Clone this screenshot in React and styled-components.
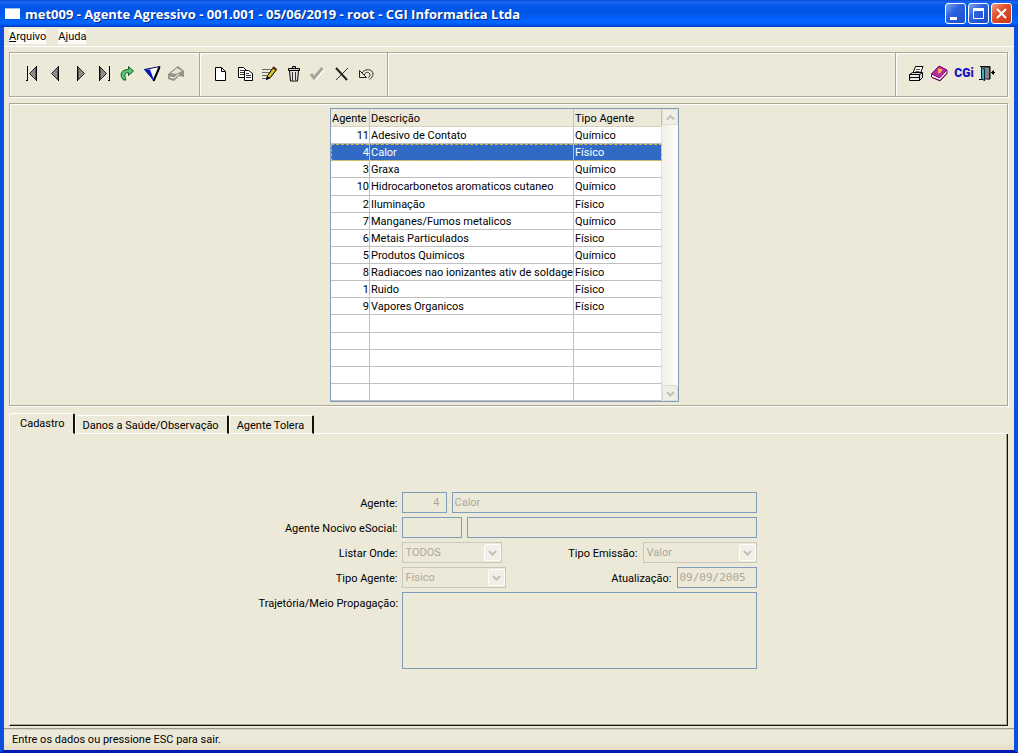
import React from 'react'
import styled, { createGlobalStyle, css } from 'styled-components'

const GlobalStyle = createGlobalStyle`
  *, *::before, *::after {
    box-sizing: border-box;
  }

  body {
    margin: 0;
    font-family: Roboto, 'Liberation Sans', sans-serif;
    font-size: 11px;
    line-height: 14px;
    color: #000;
    background: #ece9d8;
  }

  button, input, select, textarea {
    margin: 0;
    font: inherit;
    color: inherit;
  }
`

const Window = styled.div`
  min-height: 100vh;

  display: flex;
  flex-flow: column;

  background: #ece9d8;

  border: solid #0a4fe0;
  border-width: 0 4px 3px 4px;
  border-bottom-color: #0019b0;
`

const TitleBar = styled.header`
  flex: 0 0 auto;
  height: 27px;
  margin: 0 -4px;
  padding: 0 6px 0 5px;

  display: flex;
  align-items: center;

  background: linear-gradient(
    #0a47d8 0,
    #1a6af5 2px,
    #0558ea 5px,
    #0054e6 12px,
    #0162fb 20px,
    #0165ff 23px,
    #0048d8 26px,
    #0038b8 27px
  );
`

const WindowIcon = styled.span`
  flex: 0 0 auto;
  width: 15px;
  height: 11px;
  margin-right: 5px;

  background: #fff;
  border-top: 1px solid #9fc0f5;
`

const Title = styled.h1`
  flex: 1 1 auto;
  margin: 0;
  padding-top: 1px;

  font-family: 'Open Sans', 'Noto Sans', sans-serif;
  font-size: 13px;
  line-height: 16px;
  font-weight: 700;
  white-space: nowrap;

  color: #fff;
  text-shadow: 1px 1px 0 #0a2a8a;
`

const WindowButtons = styled.div`
  display: flex;
  gap: 2px;
`

const WindowButton = styled.button`
  width: 21px;
  height: 21px;
  padding: 0;

  display: flex;

  background: ${({ $close }) =>
    $close
      ? 'linear-gradient(135deg, #f0a088, #e0502c 40%, #c43c18)'
      : 'linear-gradient(135deg, #7ea4f4, #2c62e0 40%, #1c4cc8)'};
  border: 1px solid #fff;
  border-radius: 3px;
`

const MenuBar = styled.nav`
  flex: 0 0 auto;
  height: 20px;
  padding: 2px 5px;

  display: flex;
  gap: 12px;

  border-bottom: 1px solid #fff;
`

const MenuItem = styled.button`
  height: 15px;
  padding: 1px 0 0;

  background: #fcfbf6;
  border: 0;
`

const etched = css`
  border: 1px solid #aca899;
  box-shadow: 1px 1px 0 #fff, inset 1px 1px 0 #fff;
`

const ToolBar = styled.div`
  flex: 0 0 auto;
  height: 45px;
  margin: 5px 6px 0 5px;

  display: flex;

  ${etched}
`

const ToolGroup = styled.div`
  flex: ${({ $grow }) => ($grow ? '1 1 auto' : '0 0 auto')};
  padding: 0 ${({ $right }) => $right || 7}px 3px 9px;

  display: flex;
  align-items: center;

  & + & {
    padding-left: 8px;
    border-left: 1px solid #aca899;
    box-shadow: inset 1px 0 0 #fff;
  }
`

const ToolButton = styled.button`
  width: 24px;
  height: 24px;
  padding: 0;

  display: flex;

  background: none;
  border: 0;
`

const ListPanel = styled.section`
  flex: 0 0 auto;
  margin: 6px 6px 0 5px;
  padding: 4px 12px 3px 4px;

  display: flex;
  justify-content: center;

  ${etched}
`

const Grid = styled.div`
  display: flex;

  background: #fff;
  border: 1px solid #7f9db9;
`

const Table = styled.table`
  width: 331px;
  height: 292px;

  table-layout: fixed;
  border-collapse: separate;
  border-spacing: 0;
`

const HeadCell = styled.th`
  width: ${({ $width }) => $width};
  height: 18px;
  padding: 2px 0 0 1px;

  font-weight: 400;
  text-align: left;
  white-space: nowrap;

  background: #ece9d8;
  border-bottom: 1px solid #d6d2c2;
  border-right: 1px solid #c8c5b5;
`

const Row = styled.tr`
  color: ${({ $selected }) => ($selected ? '#fff' : '#000')};
  background: ${({ $selected }) => ($selected ? '#316ac5' : '#fff')};
  outline: ${({ $selected }) => ($selected ? '1px dashed #d8b93c' : 'none')};
  outline-offset: -1px;
`

const Cell = styled.td`
  height: 17px;
  padding: 2px 0 0 1px;

  line-height: 14px;
  text-align: ${({ $align }) => $align || 'left'};
  white-space: nowrap;

  border-right: 1px solid #c0c0c0;
  border-bottom: 1px solid #c0c0c0;

  &:last-child {
    border-right-color: #e4e2da;
  }
`

const ScrollBar = styled.div`
  width: 16px;

  display: flex;
  flex-flow: column;
  justify-content: space-between;

  background: linear-gradient(90deg, #f1f0ea, #fefefb);
`

const ScrollButton = styled.button`
  height: 16px;
  padding: 0;

  display: flex;
  align-items: center;
  justify-content: center;

  background: #f1f0e8;
  border: 1px solid #dfddd0;
  border-radius: 2px;
`

const Tabs = styled.div`
  flex: 0 0 auto;
  height: 21px;
  margin: 7px 6px 0 5px;

  display: flex;
  align-items: flex-end;
`

const Tab = styled.button`
  height: ${({ $active }) => ($active ? 21 : 19)}px;
  padding: ${({ $active }) => ($active ? '1px 8px 0 10px' : '2px 8px 0 7px')};

  white-space: nowrap;

  background: #ece9d8;
  border: 0;
  border-top: 1px solid #fff;
  border-left: 1px solid #fff;
  border-right: 2px solid #111;
  border-bottom: 1px solid ${({ $active }) => ($active ? '#ece9d8' : '#fff')};
  border-radius: 2px 2px 0 0;
`

const TabFiller = styled.span`
  flex: 1 1 auto;
  height: 1px;

  background: #fff;
`

const TabPanel = styled.section`
  flex: 1 1 auto;
  margin: 0 6px 2px 5px;
  padding: 1px 2px 0 0;

  display: flex;
  align-items: center;
  justify-content: center;

  border: solid #111;
  border-width: 0 1px 1px 1px;
  border-left-color: #fff;
  box-shadow: inset -1px -1px 0 #aca899;
`

const Form = styled.form`
  display: grid;
  grid-template-columns: 139px 355px;
  gap: 4px;
`

const Label = styled.label`
  padding-top: 5px;

  text-align: right;
  white-space: nowrap;
`

const FieldRow = styled.div`
  display: flex;
  gap: 5px;
`

const PairLabel = styled(Label)`
  flex: 1 1 auto;
`

const disabledField = css`
  color: #aca899;
  background: #ece9d8;
  border: 1px solid #7f9db9;
  border-radius: 0;
  outline: 0;
`

const Input = styled.input`
  flex: ${({ $width }) => ($width ? `0 0 ${$width}` : '1 1 auto')};
  width: ${({ $width }) => $width || 'auto'};
  min-width: 0;
  height: 21px;
  padding: 0 ${({ $align }) => ($align ? 6 : 2)}px 0 2px;

  text-align: ${({ $align }) => $align || 'left'};

  ${disabledField}

  ${({ $mono }) =>
    $mono &&
    css`
      font-family: 'DejaVu Sans Mono', monospace;
      font-size: 11px;
    `}
`

const TextArea = styled.textarea`
  height: 77px;
  padding: 2px;

  resize: none;

  ${disabledField}
`

const SelectBox = styled.div`
  width: ${({ $width }) => $width};
  height: 21px;

  display: grid;
  align-items: center;
  justify-items: end;

  > * {
    grid-area: 1 / 1;
  }

  > svg {
    margin-right: 1px;
    pointer-events: none;
  }
`

const NativeSelect = styled.select`
  width: 100%;
  height: 21px;
  padding: 1px 18px 0 3px;

  appearance: none;
  opacity: 1;

  ${disabledField}

  border-color: #c9c7ba;
`

const StatusBar = styled.footer`
  flex: 0 0 auto;
  height: 22px;
  padding: 4px 8px;

  background: linear-gradient(#ece9d8 60%, #e6dcc6);
  border-top: 1px solid #9c998a;
  box-shadow: inset 0 1px 0 #d8d5c6;
`

const Icon = ({ size = 24, children }) => (
  <svg width={size} height={size} viewBox={`0 0 ${size} ${size}`} fill="none" aria-hidden="true">
    {children}
  </svg>
)

const icons = {
  first: (
    <>
      <path d="M8.5 5v15M7 19.5h1" stroke="#000" />
      <path d="M17 6v13l-6.5-6.5z" fill="#8c8c8c" stroke="#222" />
      <path d="M17.5 5v15" stroke="#000" />
    </>
  ),
  previous: (
    <>
      <path d="M15 6v13l-6.5-6.5z" fill="#8c8c8c" stroke="#222" />
      <path d="M15.5 5v15" stroke="#000" />
    </>
  ),
  next: (
    <>
      <path d="M11 6v13l6.5-6.5z" fill="#8c8c8c" stroke="#222" />
      <path d="M10.5 5v15" stroke="#000" />
    </>
  ),
  last: (
    <>
      <path d="M9 6v13l6.5-6.5z" fill="#8c8c8c" stroke="#222" />
      <path d="M8.5 5v15M18.5 5v15M17 19.5h1" stroke="#000" />
    </>
  ),
  refresh: (
    <path
      d="M13.5 5.5l5 4.5-5 4.5v-3c-4 0-4.5 3-2.5 7.500H8.5C4 14 6 8.500 13.500 8.5z"
      fill="#5cc873"
      stroke="#0b5a22"
    />
  ),
  filter: (
    <>
      <path d="M5.5 8.5l15.5-3-6 14z" fill="#fff" stroke="#000060" />
      <path d="M5 8l6 .5 3 8 1 3.5z" fill="#0018c8" />
      <path d="M20.5 6l-6 14" stroke="#000" strokeWidth="2" />
    </>
  ),
  book: (
    <>
      <path d="M5 13l6-5 4-3 6 5v6l-5-1-5 5-6-2z" fill="#969489" />
      <path d="M8 12l6-5 5 3-6 3z" fill="#e6e3d4" />
      <path d="M7 16l4 1 5-4" stroke="#fff" />
    </>
  ),
  blank: <path d="M7.5 6.5h6l4 4v9h-10zM13.5 6.5v4h4" fill="#fff" stroke="#000" />,
  copy: (
    <>
      <path d="M6.5 6.5h5l3 3v7h-8z" fill="#fff" stroke="#000" />
      <path d="M8 9.5h4M8 11.5h4M8 13.5h4" stroke="#333" />
      <path d="M12.5 9.5h4l4 3v7h-8z" fill="#fff" stroke="#000" />
      <path d="M14 12.5h3M14 14.5h5M14 16.5h5" stroke="#333" />
    </>
  ),
  edit: (
    <>
      <path d="M6 8.5h10M6 11.5h8M6 14.5h6M6 17.5h8" stroke="#6c6c6c" />
      <path d="M10.5 18.5l1-4 6-8 3 2-6 8z" fill="#d8c020" stroke="#000" />
      <path d="M17 6l3.5 3" stroke="#5a1c1c" strokeWidth="2" />
      <path d="M10 19l1.5-4 2 2z" fill="#000" />
    </>
  ),
  trash: (
    <>
      <path d="M9.5 9.5h9l-1 10.5h-7z" fill="#e4e4e4" stroke="#000" />
      <path d="M12.5 11v8M15.5 11v8" stroke="#333" />
      <path d="M8.5 7.5h11v2h-11zM12.5 5.5h3v2h-3z" fill="#ccc" stroke="#000" />
    </>
  ),
  confirm: (
    <>
      <path d="M8 15l3 4 9-11" stroke="#fff" strokeWidth="2" />
      <path d="M7 13l3 4L18.5 7" stroke="#a8a699" strokeWidth="3" />
    </>
  ),
  cancel: (
    <>
      <path d="M8 7l11 12" stroke="#222" strokeWidth="2" />
      <path d="M20 7L8 19" stroke="#333" />
    </>
  ),
  undo: (
    <>
      <path
        d="M10 12c3-5 11-4 11 1 0 2-1.5 4-3.5 5.5M12 14c2-4 6-3 6 0 0 1-1 2-2 3"
        stroke="#333"
      />
      <path d="M7.5 9.5v7h7z" fill="#ece9d8" stroke="#222" />
    </>
  ),
  print: (
    <>
      <path d="M9 12l2.5-6.5H19L16.5 12z" fill="#fff" stroke="#000" />
      <path d="M12 8.5h4M11.5 10.5h4" stroke="#555" />
      <path d="M5.5 13.5l3-2h10v5l-3 3h-10z" fill="#d8d8d8" stroke="#000" />
      <path d="M5.5 13.5h10l3-2M15.5 13.5v6M6 16.5h9" stroke="#000" />
      <path d="M7 15h6M7 18h7" stroke="#fff" />
    </>
  ),
  help: (
    <>
      <path d="M3.5 13.5l7.5-8 8 4v3L12 20l-8.5-4z" fill="#fff" stroke="#4a0a44" />
      <path d="M3.5 13l7.5-8 8 4-7.5 8z" fill="#c028a4" stroke="#7c0a66" />
      <path d="M4 16.5l8 3 7-7.5" stroke="#7c0a66" />
      <path d="M10 8.5l3 .5-1 2-2 .5" stroke="#f8c83c" strokeWidth="2" />
    </>
  ),
  exit: (
    <>
      <path d="M4 5.5h10v12.5h-2M3 18.5h4" stroke="#000" />
      <path d="M8 6h5.500v12H8z" fill="#858585" stroke="#222" />
      <path d="M5.500 6l3 2.5v11.5l-3-3z" fill="#35b7b0" stroke="#024" />
      <path d="M15 11.5h4M17.5 9.500l-2 2 2 2z" fill="#000" stroke="#000" />
    </>
  ),
}

const CgiMark = styled.span`
  width: 24px;

  font-size: 12px;
  line-height: 24px;
  font-weight: 900;
  text-align: center;

  color: #1010c8;

  b {
    color: #3a18b0;
  }
`

const navigation = [
  ['first', 'Primeiro'],
  ['previous', 'Anterior'],
  ['next', 'Próximo'],
  ['last', 'Último'],
  ['refresh', 'Atualizar'],
  ['filter', 'Filtrar'],
  ['book', 'Consultar'],
]

const editing = [
  ['blank', 'Novo'],
  ['copy', 'Copiar'],
  ['edit', 'Alterar'],
  ['trash', 'Excluir'],
  ['confirm', 'Confirmar'],
  ['cancel', 'Cancelar'],
  ['undo', 'Desfazer'],
]

const agents = [
  [11, 'Adesivo de Contato', 'Químico'],
  [4, 'Calor', 'Físico'],
  [3, 'Graxa', 'Químico'],
  [10, 'Hidrocarbonetos aromaticos cutaneo', 'Químico'],
  [2, 'Iluminação', 'Físico'],
  [7, 'Manganes/Fumos metalicos', 'Químico'],
  [6, 'Metais Particulados', 'Físico'],
  [5, 'Produtos Quimicos', 'Químico'],
  [8, 'Radiacoes nao ionizantes ativ de soldage', 'Físico'],
  [1, 'Ruido', 'Físico'],
  [9, 'Vapores Organicos', 'Físico'],
]

const emptyRows = [0, 1, 2, 3, 4]

const Tool = ({ icon, label }) => (
  <ToolButton type="button" aria-label={label}>
    <Icon>{icons[icon]}</Icon>
  </ToolButton>
)

const Select = ({ id, value, width }) => (
  <SelectBox $width={width}>
    <NativeSelect id={id} disabled>
      <option>{value}</option>
    </NativeSelect>
    <Icon size={17}>
      <rect x="0.5" y="0.5" width="16" height="16" rx="1" fill="#f0efe8" stroke="#fff" />
      <path d="M5 7l3.5 3.5L12 7" stroke="#c3c1b6" strokeWidth="2" />
    </Icon>
  </SelectBox>
)

const App = () => (
  <Window>
    <GlobalStyle />
    <TitleBar>
      <WindowIcon />
      <Title>met009 - Agente Agressivo - 001.001 - 05/06/2019 - root - CGI Informatica Ltda</Title>
      <WindowButtons>
        <WindowButton type="button" aria-label="Minimizar">
          <Icon size={19}>
            <path d="M4 14.5h7" stroke="#fff" strokeWidth="3" />
          </Icon>
        </WindowButton>
        <WindowButton type="button" aria-label="Maximizar">
          <Icon size={19}>
            <path d="M4.5 5v9.5h10V5" stroke="#fff" />
            <path d="M4 5.5h11" stroke="#fff" strokeWidth="3" />
          </Icon>
        </WindowButton>
        <WindowButton type="button" aria-label="Fechar" $close>
          <Icon size={19}>
            <path d="M5 5l9 9M14 5l-9 9" stroke="#fff" strokeWidth="2" />
          </Icon>
        </WindowButton>
      </WindowButtons>
    </TitleBar>
    <MenuBar>
      <MenuItem type="button">
        <u>A</u>rquivo
      </MenuItem>
      <MenuItem type="button">
        A<u>j</u>uda
      </MenuItem>
    </MenuBar>
    <ToolBar>
      <ToolGroup $right={12}>
        {navigation.map(([icon, label]) => (
          <Tool key={icon} icon={icon} label={label} />
        ))}
      </ToolGroup>
      <ToolGroup $right={11}>
        {editing.map(([icon, label]) => (
          <Tool key={icon} icon={icon} label={label} />
        ))}
      </ToolGroup>
      <ToolGroup $grow />
      <ToolGroup>
        <Tool icon="print" label="Imprimir" />
        <Tool icon="help" label="Manual" />
        <ToolButton type="button">
          <CgiMark>
            CG<b>i</b>
          </CgiMark>
        </ToolButton>
        <Tool icon="exit" label="Sair" />
      </ToolGroup>
    </ToolBar>
    <ListPanel>
      <Grid>
        <Table>
          <thead>
            <tr>
              <HeadCell $width="39px">Agente</HeadCell>
              <HeadCell $width="204px">Descrição</HeadCell>
              <HeadCell>Tipo Agente</HeadCell>
            </tr>
          </thead>
          <tbody>
            {agents.map(([code, name, kind]) => (
              <Row key={code} $selected={code === 4}>
                <Cell $align="right">{code}</Cell>
                <Cell>{name}</Cell>
                <Cell>{kind}</Cell>
              </Row>
            ))}
            {emptyRows.map(row => (
              <Row key={`empty-${row}`}>
                <Cell />
                <Cell />
                <Cell />
              </Row>
            ))}
          </tbody>
        </Table>
        <ScrollBar>
          <ScrollButton type="button" aria-label="Rolar para cima">
            <Icon size={9}>
              <path d="M1 6.5L4.5 3 8 6.5" stroke="#c3c1b6" strokeWidth="2" />
            </Icon>
          </ScrollButton>
          <ScrollButton type="button" aria-label="Rolar para baixo">
            <Icon size={9}>
              <path d="M1 3l3.5 3.5L8 3" stroke="#c3c1b6" strokeWidth="2" />
            </Icon>
          </ScrollButton>
        </ScrollBar>
      </Grid>
    </ListPanel>
    <Tabs role="tablist">
      <Tab type="button" role="tab" aria-selected="true" $active>
        Cadastro
      </Tab>
      <Tab type="button" role="tab" aria-selected="false">
        Danos a Saúde/Observação
      </Tab>
      <Tab type="button" role="tab" aria-selected="false">
        Agente Tolera
      </Tab>
      <TabFiller />
    </Tabs>
    <TabPanel role="tabpanel">
      <Form>
        <Label htmlFor="agente">Agente:</Label>
        <FieldRow>
          <Input id="agente" $width="45px" $align="right" $mono defaultValue="4" disabled />
          <Input aria-label="Descrição" defaultValue="Calor" disabled />
        </FieldRow>
        <Label htmlFor="esocial">Agente Nocivo eSocial:</Label>
        <FieldRow>
          <Input id="esocial" $width="60px" disabled />
          <Input aria-label="Descrição eSocial" disabled />
        </FieldRow>
        <Label htmlFor="listar">Listar Onde:</Label>
        <FieldRow>
          <Select id="listar" value="TODOS" width="100px" />
          <PairLabel htmlFor="emissao">Tipo Emissão:</PairLabel>
          <Select id="emissao" value="Valor" width="114px" />
        </FieldRow>
        <Label htmlFor="tipo">Tipo Agente:</Label>
        <FieldRow>
          <Select id="tipo" value="Físico" width="104px" />
          <PairLabel htmlFor="atualizacao">Atualização:</PairLabel>
          <Input id="atualizacao" $width="80px" $mono defaultValue="09/09/2005" disabled />
        </FieldRow>
        <Label htmlFor="trajetoria">Trajetória/Meio Propagação:</Label>
        <TextArea id="trajetoria" disabled />
      </Form>
    </TabPanel>
    <StatusBar>Entre os dados ou pressione ESC para sair.</StatusBar>
  </Window>
)

export default App
